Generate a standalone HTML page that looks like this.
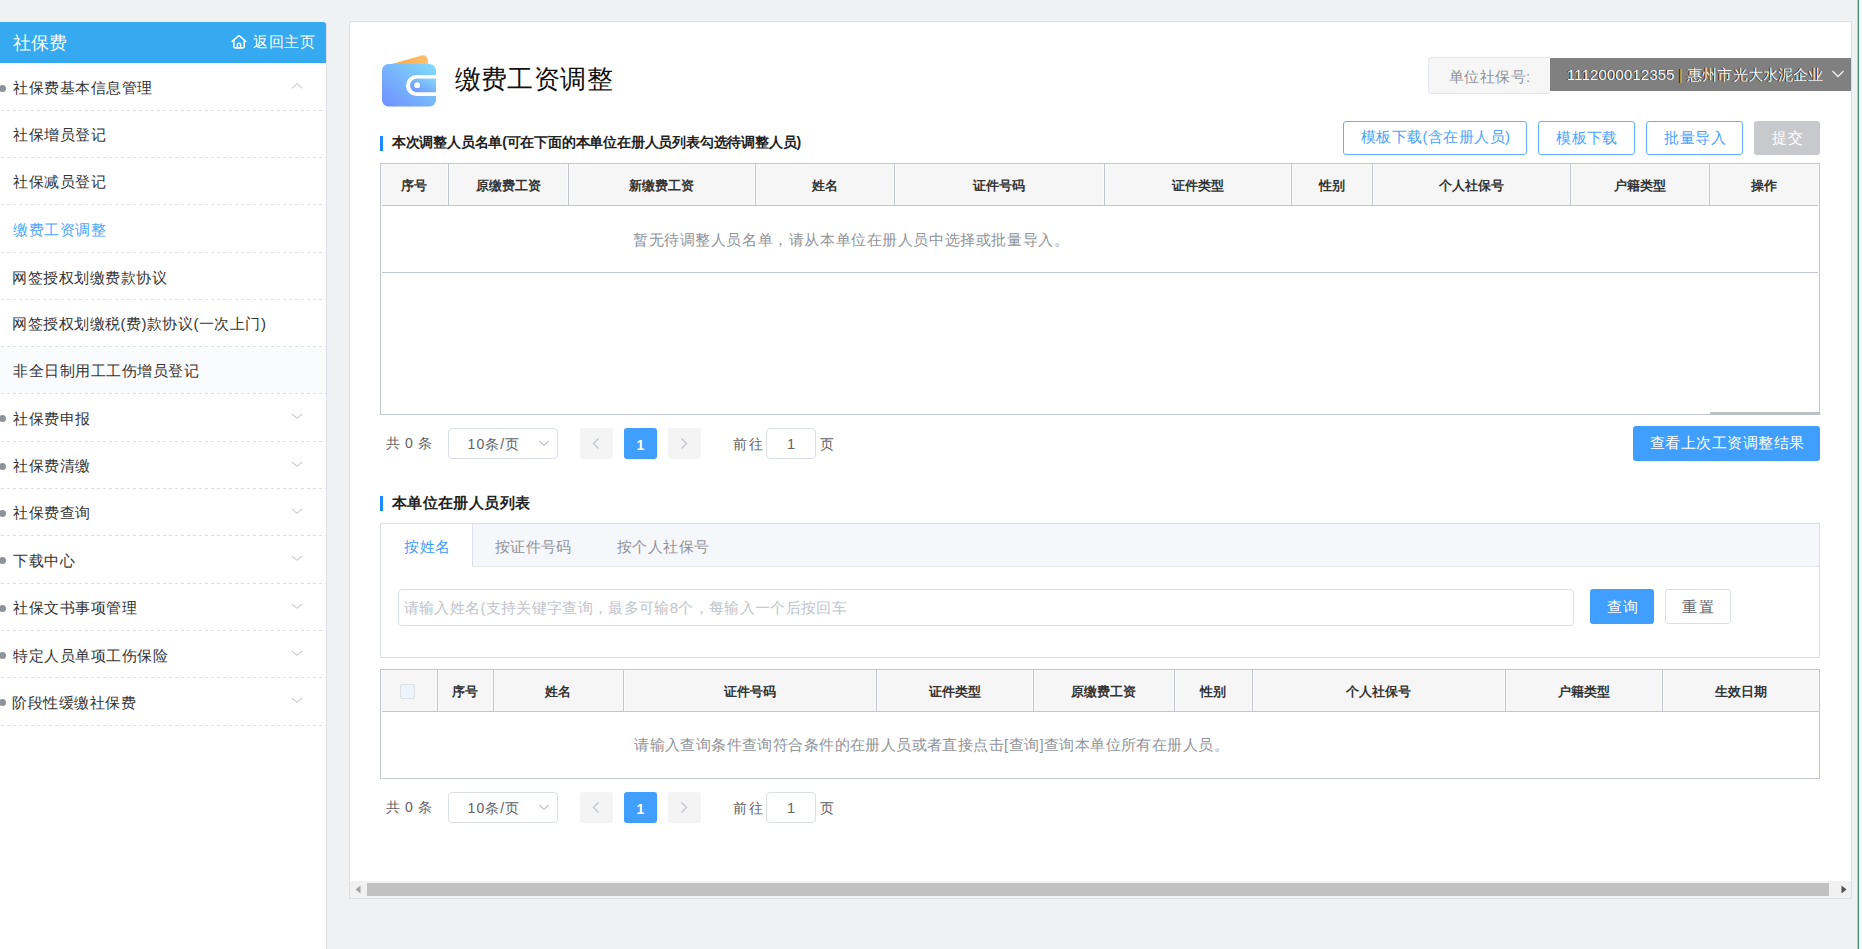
<!DOCTYPE html>
<html><head><meta charset='utf-8'><title>缴费工资调整</title>
<style>html,body{margin:0;padding:0;width:1862px;height:949px;overflow:hidden;background:#f0f1f3;font-family:'Liberation Sans',sans-serif;}</style></head>
<body>
<div style='position:absolute;left:0px;top:22px;width:326px;height:927px;background:#fff;'></div><div style='position:absolute;left:326px;top:22px;width:1px;height:927px;background:#dfe1e6;'></div><div style='position:absolute;left:0px;top:22px;width:326px;height:41px;background:#35aaf1;border-top-right-radius:3px;'></div><div style='position:absolute;left:13.00px;top:34.00px;font-size:18px;line-height:18px;color:#fff;font-weight:normal;letter-spacing:0.000px;white-space:nowrap;'>社保费</div><svg style='position:absolute;left:229px;top:33px' width='20' height='18' viewBox='0 0 20 18'><path d='M3.2 8.4 L10 2.5 L16.8 8.4' fill='none' stroke='#fff' stroke-width='1.6' stroke-linecap='round' stroke-linejoin='round'/><path d='M4.8 7.3 V13.6 Q4.8 14.9 6.1 14.9 H13.9 Q15.2 14.9 15.2 13.6 V7.3' fill='none' stroke='#fff' stroke-width='1.6'/><path d='M8.4 14.8 V11.6 Q8.4 10.3 10 10.3 Q11.6 10.3 11.6 11.6 V14.8' fill='none' stroke='#fff' stroke-width='1.5'/></svg><div style='position:absolute;left:253.00px;top:33.50px;font-size:15px;line-height:15px;color:#fff;font-weight:normal;letter-spacing:0.667px;white-space:nowrap;'>返回主页</div><div style='position:absolute;left:0px;top:110px;width:326px;height:1px;background:repeating-linear-gradient(90deg,transparent 0,transparent 1px,#dcdfe6 1px,#dcdfe6 4px,transparent 4px,transparent 6px);'></div><div style='position:absolute;left:13.00px;top:80.00px;font-size:15px;line-height:15px;color:#333;font-weight:normal;letter-spacing:0.500px;white-space:nowrap;'>社保费基本信息管理</div><div style='position:absolute;left:-1px;top:84.5px;width:7px;height:7px;border-radius:50%;background:#8e9299'></div><svg style='position:absolute;left:290px;top:81.5px' width='14' height='8' viewBox='0 0 14 8'><path d='M2 6.3 L7 1.6 L12 6.3' fill='none' stroke='#b5b8be' stroke-width='1'/></svg><div style='position:absolute;left:0px;top:157px;width:326px;height:1px;background:repeating-linear-gradient(90deg,transparent 0,transparent 1px,#dcdfe6 1px,#dcdfe6 4px,transparent 4px,transparent 6px);'></div><div style='position:absolute;left:13.00px;top:127.00px;font-size:15px;line-height:15px;color:#333;font-weight:normal;letter-spacing:0.500px;white-space:nowrap;'>社保增员登记</div><div style='position:absolute;left:0px;top:204px;width:326px;height:1px;background:repeating-linear-gradient(90deg,transparent 0,transparent 1px,#dcdfe6 1px,#dcdfe6 4px,transparent 4px,transparent 6px);'></div><div style='position:absolute;left:13.00px;top:174.00px;font-size:15px;line-height:15px;color:#333;font-weight:normal;letter-spacing:0.500px;white-space:nowrap;'>社保减员登记</div><div style='position:absolute;left:0px;top:252px;width:326px;height:1px;background:repeating-linear-gradient(90deg,transparent 0,transparent 1px,#dcdfe6 1px,#dcdfe6 4px,transparent 4px,transparent 6px);'></div><div style='position:absolute;left:13.00px;top:221.50px;font-size:15px;line-height:15px;color:#4ca6ff;font-weight:normal;letter-spacing:0.500px;white-space:nowrap;'>缴费工资调整</div><div style='position:absolute;left:0px;top:299px;width:326px;height:1px;background:repeating-linear-gradient(90deg,transparent 0,transparent 1px,#dcdfe6 1px,#dcdfe6 4px,transparent 4px,transparent 6px);'></div><div style='position:absolute;left:12.00px;top:269.50px;font-size:15px;line-height:15px;color:#333;font-weight:normal;letter-spacing:0.500px;white-space:nowrap;'>网签授权划缴费款协议</div><div style='position:absolute;left:0px;top:346px;width:326px;height:1px;background:repeating-linear-gradient(90deg,transparent 0,transparent 1px,#dcdfe6 1px,#dcdfe6 4px,transparent 4px,transparent 6px);'></div><div style='position:absolute;left:12.00px;top:316.00px;font-size:15px;line-height:15px;color:#333;font-weight:normal;letter-spacing:0.500px;white-space:nowrap;'>网签授权划缴税(费)款协议(一次上门)</div><div style='position:absolute;left:0px;top:347px;width:326px;height:46px;background:#fafbfd;'></div><div style='position:absolute;left:0px;top:393px;width:326px;height:1px;background:repeating-linear-gradient(90deg,transparent 0,transparent 1px,#dcdfe6 1px,#dcdfe6 4px,transparent 4px,transparent 6px);'></div><div style='position:absolute;left:13.00px;top:363.00px;font-size:15px;line-height:15px;color:#333;font-weight:normal;letter-spacing:0.500px;white-space:nowrap;'>非全日制用工工伤增员登记</div><div style='position:absolute;left:0px;top:441px;width:326px;height:1px;background:repeating-linear-gradient(90deg,transparent 0,transparent 1px,#dcdfe6 1px,#dcdfe6 4px,transparent 4px,transparent 6px);'></div><div style='position:absolute;left:13.00px;top:410.50px;font-size:15px;line-height:15px;color:#333;font-weight:normal;letter-spacing:0.500px;white-space:nowrap;'>社保费申报</div><div style='position:absolute;left:-1px;top:415.0px;width:7px;height:7px;border-radius:50%;background:#8e9299'></div><svg style='position:absolute;left:290px;top:413.0px' width='14' height='8' viewBox='0 0 14 8'><path d='M2 1 L7 5.3 L12 1' fill='none' stroke='#b5b8be' stroke-width='1'/></svg><div style='position:absolute;left:0px;top:488px;width:326px;height:1px;background:repeating-linear-gradient(90deg,transparent 0,transparent 1px,#dcdfe6 1px,#dcdfe6 4px,transparent 4px,transparent 6px);'></div><div style='position:absolute;left:13.00px;top:458.00px;font-size:15px;line-height:15px;color:#333;font-weight:normal;letter-spacing:0.500px;white-space:nowrap;'>社保费清缴</div><div style='position:absolute;left:-1px;top:462.5px;width:7px;height:7px;border-radius:50%;background:#8e9299'></div><svg style='position:absolute;left:290px;top:460.5px' width='14' height='8' viewBox='0 0 14 8'><path d='M2 1 L7 5.3 L12 1' fill='none' stroke='#b5b8be' stroke-width='1'/></svg><div style='position:absolute;left:0px;top:535px;width:326px;height:1px;background:repeating-linear-gradient(90deg,transparent 0,transparent 1px,#dcdfe6 1px,#dcdfe6 4px,transparent 4px,transparent 6px);'></div><div style='position:absolute;left:13.00px;top:505.00px;font-size:15px;line-height:15px;color:#333;font-weight:normal;letter-spacing:0.500px;white-space:nowrap;'>社保费查询</div><div style='position:absolute;left:-1px;top:509.5px;width:7px;height:7px;border-radius:50%;background:#8e9299'></div><svg style='position:absolute;left:290px;top:507.5px' width='14' height='8' viewBox='0 0 14 8'><path d='M2 1 L7 5.3 L12 1' fill='none' stroke='#b5b8be' stroke-width='1'/></svg><div style='position:absolute;left:0px;top:583px;width:326px;height:1px;background:repeating-linear-gradient(90deg,transparent 0,transparent 1px,#dcdfe6 1px,#dcdfe6 4px,transparent 4px,transparent 6px);'></div><div style='position:absolute;left:13.00px;top:553.00px;font-size:15px;line-height:15px;color:#333;font-weight:normal;letter-spacing:0.500px;white-space:nowrap;'>下载中心</div><div style='position:absolute;left:-1px;top:557.0px;width:7px;height:7px;border-radius:50%;background:#8e9299'></div><svg style='position:absolute;left:290px;top:555.0px' width='14' height='8' viewBox='0 0 14 8'><path d='M2 1 L7 5.3 L12 1' fill='none' stroke='#b5b8be' stroke-width='1'/></svg><div style='position:absolute;left:0px;top:630px;width:326px;height:1px;background:repeating-linear-gradient(90deg,transparent 0,transparent 1px,#dcdfe6 1px,#dcdfe6 4px,transparent 4px,transparent 6px);'></div><div style='position:absolute;left:13.00px;top:600.00px;font-size:15px;line-height:15px;color:#333;font-weight:normal;letter-spacing:0.500px;white-space:nowrap;'>社保文书事项管理</div><div style='position:absolute;left:-1px;top:604.5px;width:7px;height:7px;border-radius:50%;background:#8e9299'></div><svg style='position:absolute;left:290px;top:602.5px' width='14' height='8' viewBox='0 0 14 8'><path d='M2 1 L7 5.3 L12 1' fill='none' stroke='#b5b8be' stroke-width='1'/></svg><div style='position:absolute;left:0px;top:677px;width:326px;height:1px;background:repeating-linear-gradient(90deg,transparent 0,transparent 1px,#dcdfe6 1px,#dcdfe6 4px,transparent 4px,transparent 6px);'></div><div style='position:absolute;left:13.00px;top:647.50px;font-size:15px;line-height:15px;color:#333;font-weight:normal;letter-spacing:0.500px;white-space:nowrap;'>特定人员单项工伤保险</div><div style='position:absolute;left:-1px;top:651.5px;width:7px;height:7px;border-radius:50%;background:#8e9299'></div><svg style='position:absolute;left:290px;top:649.5px' width='14' height='8' viewBox='0 0 14 8'><path d='M2 1 L7 5.3 L12 1' fill='none' stroke='#b5b8be' stroke-width='1'/></svg><div style='position:absolute;left:0px;top:725px;width:326px;height:1px;background:repeating-linear-gradient(90deg,transparent 0,transparent 1px,#dcdfe6 1px,#dcdfe6 4px,transparent 4px,transparent 6px);'></div><div style='position:absolute;left:12.00px;top:694.50px;font-size:15px;line-height:15px;color:#333;font-weight:normal;letter-spacing:0.500px;white-space:nowrap;'>阶段性缓缴社保费</div><div style='position:absolute;left:-1px;top:699.0px;width:7px;height:7px;border-radius:50%;background:#8e9299'></div><svg style='position:absolute;left:290px;top:697.0px' width='14' height='8' viewBox='0 0 14 8'><path d='M2 1 L7 5.3 L12 1' fill='none' stroke='#b5b8be' stroke-width='1'/></svg><div style='position:absolute;left:349px;top:21px;width:1503px;height:878px;background:#fff;box-sizing:border-box;border:1px solid #dcdee2;'></div><svg style='position:absolute;left:370px;top:45px' width='80' height='70' viewBox='370 45 80 70'>
<defs><linearGradient id='wg' x1='0' y1='1' x2='1' y2='0'><stop offset='0' stop-color='#6f8fff'/><stop offset='1' stop-color='#80dcfb'/></linearGradient>
<linearGradient id='og' x1='0' y1='0' x2='1' y2='0'><stop offset='0' stop-color='#ffa640'/><stop offset='1' stop-color='#ffc070'/></linearGradient>
<linearGradient id='ig' x1='0' y1='1' x2='1' y2='0'><stop offset='0' stop-color='#6f8fff'/><stop offset='1' stop-color='#86d8fb'/></linearGradient></defs>
<path d='M390 64.5 L421.5 55.5 Q426.5 54.5 427.5 59 L428.5 64.5 Z' fill='url(#og)'/>
<rect x='382' y='64' width='54' height='42.5' rx='6.5' fill='url(#wg)'/>
<path d='M436 75 H416.5 A10.5 10.5 0 0 0 416.5 96 H436 Z' fill='#fff'/>
<path d='M436 78.6 H417 A6.8 6.8 0 0 0 417 92.3 H436 Z' fill='url(#ig)'/>
<circle cx='417.2' cy='85.2' r='2.9' fill='#fff'/>
</svg><div style='position:absolute;left:454.70px;top:66.10px;font-size:26px;line-height:26px;color:#111;font-weight:normal;letter-spacing:0.400px;white-space:nowrap;'>缴费工资调整</div><div style='position:absolute;left:1428px;top:57px;width:122px;height:37px;box-sizing:border-box;border:1px solid #e4e7ed;border-right:none;border-radius:4px 0 0 4px;background:#f6f6f6'></div><div style='position:absolute;left:1449.00px;top:68.60px;font-size:15px;line-height:15px;color:#909399;font-weight:normal;letter-spacing:0.400px;white-space:nowrap;'>单位社保号:</div><div style='position:absolute;left:1550px;top:58px;width:301px;height:33px;background:#808080;'></div><div style='position:absolute;left:1566.70px;top:67.00px;font-size:15px;line-height:15px;color:#f8f8f8;font-weight:normal;letter-spacing:0.125px;white-space:nowrap;text-shadow:-1px 0 0 #1c1c1c;'>1112000012355 <span style="color:#e8a040">|</span> 惠州市光大水泥企业</div><svg style='position:absolute;left:1831px;top:69px' width='14' height='10' viewBox='0 0 14 10'><path d='M1.5 2 L7 7.5 L12.5 2' fill='none' stroke='#f0f0f0' stroke-width='1.3'/></svg><div style='position:absolute;left:380px;top:136px;width:3px;height:15px;background:#1d88ff;'></div><div style='position:absolute;left:391.80px;top:135.00px;font-size:14px;line-height:14px;color:#222;font-weight:bold;letter-spacing:-0.200px;white-space:nowrap;'>本次调整人员名单(可在下面的本单位在册人员列表勾选待调整人员)</div><div style='position:absolute;left:1343px;top:121px;width:184px;height:34px;box-sizing:border-box;border:1px solid #66b1ff;border-radius:3px;background:#fff'></div><div style='position:absolute;left:1361.00px;top:129.30px;font-size:15px;line-height:15px;color:#4aa3ff;font-weight:normal;letter-spacing:0.400px;white-space:nowrap;'>模板下载(含在册人员)</div><div style='position:absolute;left:1538px;top:121px;width:97px;height:34px;box-sizing:border-box;border:1px solid #66b1ff;border-radius:3px;background:#fff'></div><div style='position:absolute;left:1556.40px;top:129.80px;font-size:15px;line-height:15px;color:#4aa3ff;font-weight:normal;letter-spacing:0.200px;white-space:nowrap;'>模板下载</div><div style='position:absolute;left:1646px;top:121px;width:97px;height:34px;box-sizing:border-box;border:1px solid #66b1ff;border-radius:3px;background:#fff'></div><div style='position:absolute;left:1664.40px;top:129.80px;font-size:15px;line-height:15px;color:#4aa3ff;font-weight:normal;letter-spacing:0.433px;white-space:nowrap;'>批量导入</div><div style='position:absolute;left:1754px;top:121px;width:66px;height:34px;border-radius:3px;background:#c8c9cc'></div><div style='position:absolute;left:1771.80px;top:130.30px;font-size:15px;line-height:15px;color:#fff;font-weight:normal;letter-spacing:1.000px;white-space:nowrap;'>提交</div><div style='position:absolute;left:381px;top:164px;width:1438px;height:41px;background:#fafafa;'></div><div style='position:absolute;left:382px;top:165px;width:1436px;height:40px;background:#f6f6f6;'></div><div style='position:absolute;left:380px;top:163px;width:1440px;height:1px;background:#c3c6cf;'></div><div style='position:absolute;left:382px;top:205px;width:1436px;height:1px;background:#c3c6cf;'></div><div style='position:absolute;left:382px;top:272px;width:1436px;height:1px;background:#c3c6cf;'></div><div style='position:absolute;left:380px;top:163px;width:1px;height:252px;background:#c3c6cf;'></div><div style='position:absolute;left:1819px;top:163px;width:1px;height:252px;background:#c3c6cf;'></div><div style='position:absolute;left:380px;top:414px;width:1440px;height:1px;background:#c3c6cf;'></div><div style='position:absolute;left:447px;top:164px;width:3px;height:41px;background:#fbfbfb;'></div><div style='position:absolute;left:448px;top:164px;width:1px;height:42px;background:#c3c6cf;'></div><div style='position:absolute;left:567px;top:164px;width:3px;height:41px;background:#fbfbfb;'></div><div style='position:absolute;left:568px;top:164px;width:1px;height:42px;background:#c3c6cf;'></div><div style='position:absolute;left:754px;top:164px;width:3px;height:41px;background:#fbfbfb;'></div><div style='position:absolute;left:755px;top:164px;width:1px;height:42px;background:#c3c6cf;'></div><div style='position:absolute;left:893px;top:164px;width:3px;height:41px;background:#fbfbfb;'></div><div style='position:absolute;left:894px;top:164px;width:1px;height:42px;background:#c3c6cf;'></div><div style='position:absolute;left:1103px;top:164px;width:3px;height:41px;background:#fbfbfb;'></div><div style='position:absolute;left:1104px;top:164px;width:1px;height:42px;background:#c3c6cf;'></div><div style='position:absolute;left:1290px;top:164px;width:3px;height:41px;background:#fbfbfb;'></div><div style='position:absolute;left:1291px;top:164px;width:1px;height:42px;background:#c3c6cf;'></div><div style='position:absolute;left:1371px;top:164px;width:3px;height:41px;background:#fbfbfb;'></div><div style='position:absolute;left:1372px;top:164px;width:1px;height:42px;background:#c3c6cf;'></div><div style='position:absolute;left:1569px;top:164px;width:3px;height:41px;background:#fbfbfb;'></div><div style='position:absolute;left:1570px;top:164px;width:1px;height:42px;background:#c3c6cf;'></div><div style='position:absolute;left:1708px;top:164px;width:3px;height:41px;background:#fbfbfb;'></div><div style='position:absolute;left:1709px;top:164px;width:1px;height:42px;background:#c3c6cf;'></div><div style='position:absolute;left:380px;top:179px;width:68px;text-align:center;font-size:13px;line-height:13px;color:#333;font-weight:bold;white-space:nowrap;'>序号</div><div style='position:absolute;left:448px;top:179px;width:120px;text-align:center;font-size:13px;line-height:13px;color:#333;font-weight:bold;white-space:nowrap;'>原缴费工资</div><div style='position:absolute;left:568px;top:179px;width:187px;text-align:center;font-size:13px;line-height:13px;color:#333;font-weight:bold;white-space:nowrap;'>新缴费工资</div><div style='position:absolute;left:755px;top:179px;width:139px;text-align:center;font-size:13px;line-height:13px;color:#333;font-weight:bold;white-space:nowrap;'>姓名</div><div style='position:absolute;left:894px;top:179px;width:210px;text-align:center;font-size:13px;line-height:13px;color:#333;font-weight:bold;white-space:nowrap;'>证件号码</div><div style='position:absolute;left:1104px;top:179px;width:187px;text-align:center;font-size:13px;line-height:13px;color:#333;font-weight:bold;white-space:nowrap;'>证件类型</div><div style='position:absolute;left:1291px;top:179px;width:81px;text-align:center;font-size:13px;line-height:13px;color:#333;font-weight:bold;white-space:nowrap;'>性别</div><div style='position:absolute;left:1372px;top:179px;width:198px;text-align:center;font-size:13px;line-height:13px;color:#333;font-weight:bold;white-space:nowrap;'>个人社保号</div><div style='position:absolute;left:1570px;top:179px;width:139px;text-align:center;font-size:13px;line-height:13px;color:#333;font-weight:bold;white-space:nowrap;'>户籍类型</div><div style='position:absolute;left:1709px;top:179px;width:110px;text-align:center;font-size:13px;line-height:13px;color:#333;font-weight:bold;white-space:nowrap;'>操作</div><div style='position:absolute;left:1710px;top:412px;width:110px;height:3px;background:#bcc0c9;'></div><div style='position:absolute;left:633.00px;top:231.60px;font-size:15px;line-height:15px;color:#909399;font-weight:normal;letter-spacing:0.581px;white-space:nowrap;'>暂无待调整人员名单，请从本单位在册人员中选择或批量导入。</div><div style='position:absolute;left:386.00px;top:436.00px;font-size:14px;line-height:14px;color:#606266;font-weight:normal;letter-spacing:0.500px;white-space:nowrap;'>共 0 条</div><div style='position:absolute;left:448px;top:428px;width:110px;height:31px;box-sizing:border-box;border:1px solid #dcdfe6;border-radius:4px;background:#fff'></div><div style='position:absolute;left:467.60px;top:436.50px;font-size:14px;line-height:14px;color:#606266;font-weight:normal;letter-spacing:1.000px;white-space:nowrap;'>10条/页</div><svg style='position:absolute;left:538px;top:439px' width='12' height='8' viewBox='0 0 12 8'><path d='M1.5 2 L6 6.5 L10.5 2' fill='none' stroke='#c0c4cc' stroke-width='1.1'/></svg><div style='position:absolute;left:580px;top:428px;width:33px;height:31px;background:#f4f4f5;border-radius:3px;'></div><svg style='position:absolute;left:590px;top:437px' width='12' height='13' viewBox='0 0 12 13'><path d='M8.5 1.5 L3.5 6.5 L8.5 11.5' fill='none' stroke='#c0c4cc' stroke-width='1.3'/></svg><div style='position:absolute;left:624px;top:428px;width:33px;height:31px;background:#409eff;border-radius:3px;'></div><div style='position:absolute;left:624px;top:437.5px;width:33px;text-align:center;font-size:14px;line-height:14px;color:#fff;font-weight:bold;white-space:nowrap;'>1</div><div style='position:absolute;left:668px;top:428px;width:33px;height:31px;background:#f4f4f5;border-radius:3px;'></div><svg style='position:absolute;left:678px;top:437px' width='12' height='13' viewBox='0 0 12 13'><path d='M3.5 1.5 L8.5 6.5 L3.5 11.5' fill='none' stroke='#c0c4cc' stroke-width='1.3'/></svg><div style='position:absolute;left:733.00px;top:436.50px;font-size:14px;line-height:14px;color:#606266;font-weight:normal;letter-spacing:1.700px;white-space:nowrap;'>前往</div><div style='position:absolute;left:766px;top:428px;width:50px;height:31px;box-sizing:border-box;border:1px solid #dcdfe6;border-radius:4px;background:#fff'></div><div style='position:absolute;left:766px;top:437px;width:50px;text-align:center;font-size:14.5px;line-height:14.5px;color:#606266;font-weight:normal;white-space:nowrap;'>1</div><div style='position:absolute;left:820.40px;top:436.50px;font-size:14px;line-height:14px;color:#606266;font-weight:normal;letter-spacing:0.000px;white-space:nowrap;'>页</div><div style='position:absolute;left:1633px;top:426px;width:187px;height:35px;background:#409eff;border-radius:3px;'></div><div style='position:absolute;left:1650.00px;top:435.30px;font-size:15px;line-height:15px;color:#fff;font-weight:normal;letter-spacing:0.478px;white-space:nowrap;'>查看上次工资调整结果</div><div style='position:absolute;left:380px;top:496px;width:3px;height:15px;background:#1d88ff;'></div><div style='position:absolute;left:391.90px;top:495.00px;font-size:15px;line-height:15px;color:#222;font-weight:bold;letter-spacing:0.375px;white-space:nowrap;'>本单位在册人员列表</div><div style='position:absolute;left:380px;top:523px;width:1440px;height:135px;box-sizing:border-box;border:1px solid #dcdfe6;background:#fff'></div><div style='position:absolute;left:381px;top:524px;width:1438px;height:42px;background:#f5f7fa;'></div><div style='position:absolute;left:381px;top:566px;width:1438px;height:1px;background:#e4e7ed;'></div><div style='position:absolute;left:381px;top:524px;width:91px;height:43px;background:#fff;'></div><div style='position:absolute;left:472px;top:524px;width:1px;height:42px;background:#dcdfe6;'></div><div style='position:absolute;left:404.00px;top:538.50px;font-size:15px;line-height:15px;color:#409eff;font-weight:normal;letter-spacing:0.500px;white-space:nowrap;'>按姓名</div><div style='position:absolute;left:495.00px;top:538.50px;font-size:15px;line-height:15px;color:#909399;font-weight:normal;letter-spacing:0.325px;white-space:nowrap;'>按证件号码</div><div style='position:absolute;left:617.00px;top:538.50px;font-size:15px;line-height:15px;color:#909399;font-weight:normal;letter-spacing:0.460px;white-space:nowrap;'>按个人社保号</div><div style='position:absolute;left:398px;top:589px;width:1176px;height:37px;box-sizing:border-box;border:1px solid #dcdfe6;border-radius:4px;background:#fff'></div><div style='position:absolute;left:403.80px;top:600.00px;font-size:15px;line-height:15px;color:#c0c4cc;font-weight:normal;letter-spacing:0.328px;white-space:nowrap;'>请输入姓名(支持关键字查询，最多可输8个，每输入一个后按回车</div><div style='position:absolute;left:1590px;top:589px;width:64px;height:35px;background:#409eff;border-radius:3px;'></div><div style='position:absolute;left:1606.70px;top:598.80px;font-size:15px;line-height:15px;color:#fff;font-weight:normal;letter-spacing:1.300px;white-space:nowrap;'>查询</div><div style='position:absolute;left:1665px;top:589px;width:66px;height:35px;box-sizing:border-box;border:1px solid #dcdfe6;border-radius:3px;background:#fff'></div><div style='position:absolute;left:1682.00px;top:599.30px;font-size:15px;line-height:15px;color:#606266;font-weight:normal;letter-spacing:1.700px;white-space:nowrap;'>重置</div><div style='position:absolute;left:381px;top:670px;width:1438px;height:41px;background:#fafafa;'></div><div style='position:absolute;left:382px;top:671px;width:1437px;height:40px;background:#f6f6f6;'></div><div style='position:absolute;left:380px;top:669px;width:1440px;height:1px;background:#c3c6cf;'></div><div style='position:absolute;left:382px;top:711px;width:1437px;height:1px;background:#c3c6cf;'></div><div style='position:absolute;left:382px;top:778px;width:1437px;height:1px;background:#c3c6cf;'></div><div style='position:absolute;left:380px;top:669px;width:1px;height:110px;background:#c3c6cf;'></div><div style='position:absolute;left:1819px;top:669px;width:1px;height:110px;background:#c3c6cf;'></div><div style='position:absolute;left:436px;top:670px;width:3px;height:41px;background:#fbfbfb;'></div><div style='position:absolute;left:437px;top:670px;width:1px;height:42px;background:#c3c6cf;'></div><div style='position:absolute;left:492px;top:670px;width:3px;height:41px;background:#fbfbfb;'></div><div style='position:absolute;left:493px;top:670px;width:1px;height:42px;background:#c3c6cf;'></div><div style='position:absolute;left:622px;top:670px;width:3px;height:41px;background:#fbfbfb;'></div><div style='position:absolute;left:623px;top:670px;width:1px;height:42px;background:#c3c6cf;'></div><div style='position:absolute;left:875px;top:670px;width:3px;height:41px;background:#fbfbfb;'></div><div style='position:absolute;left:876px;top:670px;width:1px;height:42px;background:#c3c6cf;'></div><div style='position:absolute;left:1032px;top:670px;width:3px;height:41px;background:#fbfbfb;'></div><div style='position:absolute;left:1033px;top:670px;width:1px;height:42px;background:#c3c6cf;'></div><div style='position:absolute;left:1173px;top:670px;width:3px;height:41px;background:#fbfbfb;'></div><div style='position:absolute;left:1174px;top:670px;width:1px;height:42px;background:#c3c6cf;'></div><div style='position:absolute;left:1251px;top:670px;width:3px;height:41px;background:#fbfbfb;'></div><div style='position:absolute;left:1252px;top:670px;width:1px;height:42px;background:#c3c6cf;'></div><div style='position:absolute;left:1504px;top:670px;width:3px;height:41px;background:#fbfbfb;'></div><div style='position:absolute;left:1505px;top:670px;width:1px;height:42px;background:#c3c6cf;'></div><div style='position:absolute;left:1661px;top:670px;width:3px;height:41px;background:#fbfbfb;'></div><div style='position:absolute;left:1662px;top:670px;width:1px;height:42px;background:#c3c6cf;'></div><div style='position:absolute;left:437px;top:685px;width:56px;text-align:center;font-size:13px;line-height:13px;color:#333;font-weight:bold;white-space:nowrap;'>序号</div><div style='position:absolute;left:493px;top:685px;width:130px;text-align:center;font-size:13px;line-height:13px;color:#333;font-weight:bold;white-space:nowrap;'>姓名</div><div style='position:absolute;left:623px;top:685px;width:253px;text-align:center;font-size:13px;line-height:13px;color:#333;font-weight:bold;white-space:nowrap;'>证件号码</div><div style='position:absolute;left:876px;top:685px;width:157px;text-align:center;font-size:13px;line-height:13px;color:#333;font-weight:bold;white-space:nowrap;'>证件类型</div><div style='position:absolute;left:1033px;top:685px;width:141px;text-align:center;font-size:13px;line-height:13px;color:#333;font-weight:bold;white-space:nowrap;'>原缴费工资</div><div style='position:absolute;left:1174px;top:685px;width:78px;text-align:center;font-size:13px;line-height:13px;color:#333;font-weight:bold;white-space:nowrap;'>性别</div><div style='position:absolute;left:1252px;top:685px;width:253px;text-align:center;font-size:13px;line-height:13px;color:#333;font-weight:bold;white-space:nowrap;'>个人社保号</div><div style='position:absolute;left:1505px;top:685px;width:157px;text-align:center;font-size:13px;line-height:13px;color:#333;font-weight:bold;white-space:nowrap;'>户籍类型</div><div style='position:absolute;left:1662px;top:685px;width:157px;text-align:center;font-size:13px;line-height:13px;color:#333;font-weight:bold;white-space:nowrap;'>生效日期</div><div style='position:absolute;left:400px;top:684px;width:15px;height:15px;box-sizing:border-box;border:1px solid #dcdfe6;border-radius:2px;background:#edf2fc'></div><div style='position:absolute;left:634.20px;top:736.80px;font-size:15px;line-height:15px;color:#909399;font-weight:normal;letter-spacing:0.410px;white-space:nowrap;'>请输入查询条件查询符合条件的在册人员或者直接点击[查询]查询本单位所有在册人员。</div><div style='position:absolute;left:386.00px;top:800.00px;font-size:14px;line-height:14px;color:#606266;font-weight:normal;letter-spacing:0.500px;white-space:nowrap;'>共 0 条</div><div style='position:absolute;left:448px;top:792px;width:110px;height:31px;box-sizing:border-box;border:1px solid #dcdfe6;border-radius:4px;background:#fff'></div><div style='position:absolute;left:467.60px;top:800.50px;font-size:14px;line-height:14px;color:#606266;font-weight:normal;letter-spacing:1.000px;white-space:nowrap;'>10条/页</div><svg style='position:absolute;left:538px;top:803px' width='12' height='8' viewBox='0 0 12 8'><path d='M1.5 2 L6 6.5 L10.5 2' fill='none' stroke='#c0c4cc' stroke-width='1.1'/></svg><div style='position:absolute;left:580px;top:792px;width:33px;height:31px;background:#f4f4f5;border-radius:3px;'></div><svg style='position:absolute;left:590px;top:801px' width='12' height='13' viewBox='0 0 12 13'><path d='M8.5 1.5 L3.5 6.5 L8.5 11.5' fill='none' stroke='#c0c4cc' stroke-width='1.3'/></svg><div style='position:absolute;left:624px;top:792px;width:33px;height:31px;background:#409eff;border-radius:3px;'></div><div style='position:absolute;left:624px;top:801.5px;width:33px;text-align:center;font-size:14px;line-height:14px;color:#fff;font-weight:bold;white-space:nowrap;'>1</div><div style='position:absolute;left:668px;top:792px;width:33px;height:31px;background:#f4f4f5;border-radius:3px;'></div><svg style='position:absolute;left:678px;top:801px' width='12' height='13' viewBox='0 0 12 13'><path d='M3.5 1.5 L8.5 6.5 L3.5 11.5' fill='none' stroke='#c0c4cc' stroke-width='1.3'/></svg><div style='position:absolute;left:733.00px;top:800.50px;font-size:14px;line-height:14px;color:#606266;font-weight:normal;letter-spacing:1.700px;white-space:nowrap;'>前往</div><div style='position:absolute;left:766px;top:792px;width:50px;height:31px;box-sizing:border-box;border:1px solid #dcdfe6;border-radius:4px;background:#fff'></div><div style='position:absolute;left:766px;top:801px;width:50px;text-align:center;font-size:14.5px;line-height:14.5px;color:#606266;font-weight:normal;white-space:nowrap;'>1</div><div style='position:absolute;left:820.40px;top:800.50px;font-size:14px;line-height:14px;color:#606266;font-weight:normal;letter-spacing:0.000px;white-space:nowrap;'>页</div><div style='position:absolute;left:350px;top:881px;width:1501px;height:17px;background:#f1f1f1;'></div><div style='position:absolute;left:367px;top:883px;width:1462px;height:13px;background:#c1c1c1;'></div><svg style='position:absolute;left:354px;top:884px' width='8' height='11' viewBox='0 0 8 11'><path d='M6.5 1.5 L1.5 5.5 L6.5 9.5 Z' fill='#a3a3a3'/></svg><svg style='position:absolute;left:1840px;top:884px' width='8' height='11' viewBox='0 0 8 11'><path d='M1.5 1.5 L6.5 5.5 L1.5 9.5 Z' fill='#505050'/></svg><div style='position:absolute;left:1856px;top:0px;width:1px;height:949px;background:#f6eef1;'></div><div style='position:absolute;left:1857px;top:0px;width:1px;height:949px;background:#8ee6c6;'></div><div style='position:absolute;left:1858px;top:0px;width:1px;height:949px;background:#3f9a74;'></div><div style='position:absolute;left:1859px;top:0px;width:3px;height:949px;background:#fff;'></div>
</body></html>
